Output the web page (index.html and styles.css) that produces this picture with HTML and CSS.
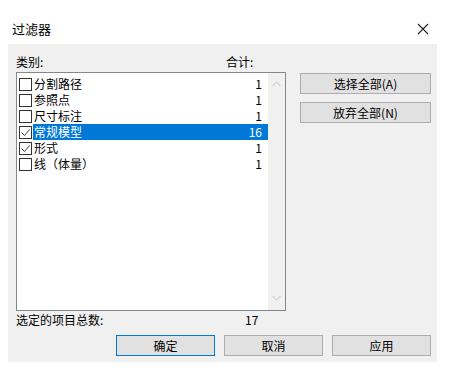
FILE: index.html
```html
<!DOCTYPE html>
<html lang="zh-CN">
<head>
    <meta charset="UTF-8">
    <title>过滤器</title>
    <link rel="stylesheet" href="styles.css">
</head>
<body>
    <div class="titlebar">
        <span class="title">过滤器</span>
        <svg class="close" width="12" height="12" viewBox="0 0 12 12">
            <path d="M1 1 L11 11 M11 1 L1 11" stroke="#222" stroke-width="1.1" fill="none"/>
        </svg>
    </div>

    <div class="panel">
        <div class="main">
            <div class="left">
                <div class="heads">
                    <span class="heads-name">类别:</span>
                    <span>合计:</span>
                </div>

                <div class="listbox">
                    <div class="rows">
                        <div class="row">
                            <span class="check"></span>
                            <span class="item"><span>分割路径</span><span>1</span></span>
                        </div>
                        <div class="row">
                            <span class="check"></span>
                            <span class="item"><span>参照点</span><span>1</span></span>
                        </div>
                        <div class="row">
                            <span class="check"></span>
                            <span class="item"><span>尺寸标注</span><span>1</span></span>
                        </div>
                        <div class="row">
                            <span class="check checked">
                                <svg width="11" height="11" viewBox="0 0 11 11"><path d="M1.5 5.5 L4.5 8.5 L9.5 2.5" stroke="#333" stroke-width="1" fill="none"/></svg>
                            </span>
                            <span class="item selected"><span>常规模型</span><span>16</span></span>
                        </div>
                        <div class="row">
                            <span class="check checked">
                                <svg width="11" height="11" viewBox="0 0 11 11"><path d="M1.5 5.5 L4.5 8.5 L9.5 2.5" stroke="#333" stroke-width="1" fill="none"/></svg>
                            </span>
                            <span class="item"><span>形式</span><span>1</span></span>
                        </div>
                        <div class="row">
                            <span class="check"></span>
                            <span class="item"><span>线（体量）</span><span>1</span></span>
                        </div>
                    </div>
                    <div class="scrollbar">
                        <svg width="9" height="6" viewBox="0 0 9 6"><path d="M0.5 5 L4.5 1 L8.5 5" stroke="#c2c2c2" fill="none"/></svg>
                        <svg width="9" height="6" viewBox="0 0 9 6"><path d="M0.5 1 L4.5 5 L8.5 1" stroke="#c2c2c2" fill="none"/></svg>
                    </div>
                </div>

                <div class="summary">
                    <span class="summary-name">选定的项目总数:</span>
                    <span>17</span>
                </div>
            </div>

            <div class="side">
                <button class="btn btn-wide">选择全部(A)</button>
                <button class="btn btn-wide">放弃全部(N)</button>
            </div>
        </div>

        <div class="footer">
            <button class="btn btn-default">确定</button>
            <button class="btn">取消</button>
            <button class="btn">应用</button>
        </div>
    </div>
</body>
</html>
```

FILE: styles.css
```css
body {
    margin: 0;
    background: white;
    font-family: "Noto Sans CJK SC", "Liberation Sans", sans-serif;
    font-size: 12px;
    color: black;
}
.titlebar {
    height: 44px;
    display: flex;
    justify-content: space-between;
    padding: 0 31px 0 12px;
    box-sizing: border-box;
}
.title {
    line-height: 16px;
    margin-top: 21px;
    font-size: 13px;
}
.close {
    margin-top: 23px;
}
.panel {
    width: 429px;
    margin-left: 8px;
    background: #f0f0f0;
    padding: 10px 6px 6px 8px;
    box-sizing: border-box;
}
.main {
    display: flex;
    gap: 14px;
}
.left {
    width: 270px;
}
.heads, .summary {
    display: flex;
    height: 16px;
    line-height: 16px;
}
.heads {
    margin-bottom: 2px;
}
.heads-name {
    width: 210px;
}
.summary {
    margin-top: 1px;
}
.summary-name {
    width: 229px;
}
.listbox {
    height: 239px;
    border: 1px solid #828790;
    background: white;
    box-sizing: border-box;
    display: flex;
}
.rows {
    flex: 1;
    padding-top: 3px;
}
.row {
    display: flex;
    align-items: center;
    height: 16px;
}
.check {
    width: 13px;
    height: 13px;
    border: 1px solid #333;
    box-sizing: border-box;
    margin: 1px 1px 0 2px;
    display: flex;
    align-items: center;
    justify-content: center;
    background: white;
}
.item {
    flex: 1;
    display: flex;
    justify-content: space-between;
    height: 16px;
    line-height: 16px;
    padding: 0 6px 0 1px;
}
.item.selected {
    background: #0078d7;
    color: white;
}
.scrollbar {
    width: 17px;
    background: #f0f0f0;
    display: flex;
    flex-direction: column;
    justify-content: space-between;
    align-items: center;
    padding: 8px 0 9px;
    box-sizing: border-box;
}
.side {
    display: flex;
    flex-direction: column;
    gap: 8px;
    margin-top: 19px;
}
.btn {
    height: 21px;
    width: 99px;
    background: #e1e1e1;
    border: 1px solid #adadad;
    font-family: "Noto Sans CJK SC", "Liberation Sans", sans-serif;
    font-size: 12px;
    padding: 0;
    color: black;
}
.btn-wide {
    width: 131px;
}
.btn-default {
    border-color: #0078d7;
}
.footer {
    display: flex;
    justify-content: flex-end;
    gap: 9px;
    margin-top: 7px;
}
```
